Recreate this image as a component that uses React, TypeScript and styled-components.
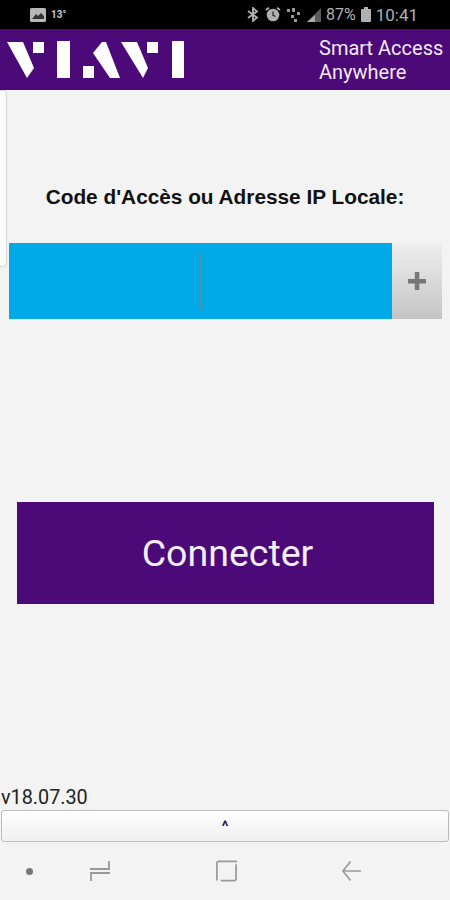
import React, {FC} from 'react';
import styled, {createGlobalStyle} from 'styled-components';

const GlobalStyle = createGlobalStyle`
    html, body {
        margin: 0;
        padding: 0;
        background: #f3f3f3;
        font-family: Roboto, "Liberation Sans", sans-serif;
    }
`;

const Screen = styled.div`
    position: relative;
    display: flex;
    flex-direction: column;
    width: 450px;
    height: 900px;
    overflow: hidden;
    background: #f3f3f3;
`;

const StatusBar = styled.div`
    display: flex;
    align-items: center;
    justify-content: space-between;
    height: 29px;
    padding: 0 32px 0 30px;
    background: #000;
    color: #b4b4b4;
    font-size: 14px;
`;

const StatusGroup = styled.div`
    display: flex;
    align-items: center;
    gap: 5px;
`;

const Weather = styled.span`
    color: #c8c8c8;
    font-size: 10px;
    font-weight: 700;
`;

const StatusText = styled.span<{ $size: number }>`
    font-size: ${({$size}) => $size}px;
    color: #b0b0b0;
    white-space: nowrap;
`;

const Header = styled.header`
    display: flex;
    align-items: center;
    justify-content: space-between;
    height: 61px;
    padding: 0 6px 0 7px;
    box-sizing: border-box;
    background: #4b0a78;
`;

const Tagline = styled.div`
    width: 125px;
    color: #f1e9f5;
    font-size: 20px;
    line-height: 24px;
`;

const SideTab = styled.div`
    position: absolute;
    top: 90px;
    left: 0;
    width: 7px;
    height: 177px;
    box-sizing: border-box;
    background: #fbfbfb;
    border: 1px solid #d6d6d6;
    border-left: 0;
    border-radius: 0 4px 4px 0;
`;

const Main = styled.main`
    flex: 1;
    display: flex;
    flex-direction: column;
`;

const Label = styled.div`
    margin-top: 95px;
    color: #111;
    font-family: "Liberation Sans", Arial, sans-serif;
    font-size: 20.8px;
    font-weight: 700;
    line-height: 24px;
    text-align: center;
`;

const InputRow = styled.div`
    display: flex;
    height: 76px;
    margin: 34px 8px 0 9px;
`;

const CodeField = styled.div`
    flex: 1;
    display: flex;
    align-items: center;
    justify-content: center;
    background: #00aae9;
`;

const Caret = styled.div`
    width: 2px;
    height: 57px;
    background: #5b8ca3;
`;

const PlusButton = styled.div`
    display: flex;
    align-items: center;
    justify-content: center;
    width: 50px;
    background: linear-gradient(#efefef, #c4c4c4);
    color: #777;
`;

const ConnectButton = styled.button`
    display: block;
    height: 102px;
    margin: 183px 16px 0 17px;
    padding: 0 0 0 4px;
    border: 0;
    background: #4b0a78;
    color: #f4eef8;
    font-family: Roboto, sans-serif;
    font-size: 37.5px;
`;

const Version = styled.div`
    margin-top: auto;
    padding-left: 1px;
    color: #222;
    font-size: 19.8px;
    line-height: 20px;
`;

const Drawer = styled.div`
    display: flex;
    align-items: center;
    justify-content: center;
    height: 32px;
    margin: 2px 1px 0;
    box-sizing: border-box;
    background: linear-gradient(#ffffff, #efefef);
    border: 1px solid #bdbdbd;
    border-radius: 3px;
    color: #222;
    font-size: 15px;
    font-weight: 700;
`;

const NavBar = styled.nav`
    display: flex;
    align-items: center;
    height: 58px;
    color: #9a9a9a;
`;

const NavSlot = styled.div<{ $left: number; $width: number }>`
    display: flex;
    justify-content: center;
    width: ${({$width}) => $width}px;
    margin-left: ${({$left}) => $left}px;
`;

const ViaviLogo: FC = () => (
    <svg width="178" height="38" viewBox="7 41 178 38" fill="#fff">
        <polygon points="7,42 23,42 34,68 27,78" />
        <rect x="33" y="42" width="11" height="11" />
        <rect x="57" y="41" width="13" height="37" />
        <rect x="83" y="66" width="11" height="12" />
        <polygon points="102,42 106,42 120,78 110,78 93,53" />
        <polygon points="121,42 137,42 148,68 143,78" />
        <rect x="147" y="42" width="11" height="11" />
        <rect x="172" y="41" width="12" height="37" />
    </svg>
);

const App: FC = () => (
    <>
        <GlobalStyle />
        <Screen>
            <StatusBar>
                <StatusGroup>
                    <svg width="16" height="14" viewBox="0 0 16 14">
                        <rect width="16" height="14" rx="1.5" fill="#b8b8b8" />
                        <path d="M2 11 L6 6 L8 8 L11 5 L14 8 V11 Z" fill="#333" />
                    </svg>
                    <Weather>13°</Weather>
                </StatusGroup>
                <StatusGroup>
                    <svg width="14" height="15" viewBox="0 0 14 15" fill="none" stroke="#b0b0b0" strokeWidth="1.8">
                        <path d="M2 4 L11 10.5 L7 14 V1 L11 4.5 L2 11" />
                    </svg>
                    <svg width="16" height="15" viewBox="0 0 16 15">
                        <circle cx="8" cy="8" r="6.3" fill="#b0b0b0" />
                        <path d="M8 4.5 V8.3 L10.5 9.5" fill="none" stroke="#222" strokeWidth="1.2" />
                        <path d="M1 3 L4 0.8 M15 3 L12 0.8" stroke="#b0b0b0" strokeWidth="1.8" />
                    </svg>
                    <svg width="15" height="15" viewBox="0 0 15 15" fill="#9a9a9a">
                        <rect x="1" y="2" width="3" height="3" />
                        <rect x="6" y="1" width="3" height="4" />
                        <rect x="11" y="5" width="3" height="3" />
                        <rect x="5" y="8" width="3" height="3" />
                        <rect x="8" y="12" width="3" height="3" />
                    </svg>
                    <svg width="15" height="15" viewBox="0 0 15 15">
                        <polygon points="1,15 15,15 15,1" fill="#5a5a5a" />
                        <polygon points="1,15 9,15 9,8" fill="#a8a8a8" />
                    </svg>
                    <StatusText $size={16}>87%</StatusText>
                    <svg width="10" height="15" viewBox="0 0 10 15" fill="#b0b0b0">
                        <rect x="3" y="0" width="4" height="2" />
                        <rect x="0" y="2" width="10" height="13" rx="1" />
                    </svg>
                    <StatusText $size={17}>10:41</StatusText>
                </StatusGroup>
            </StatusBar>
            <Header>
                <ViaviLogo />
                <Tagline>Smart Access Anywhere</Tagline>
            </Header>
            <SideTab />
            <Main>
                <Label>Code d'Accès ou Adresse IP Locale:</Label>
                <InputRow>
                    <CodeField>
                        <Caret />
                    </CodeField>
                    <PlusButton>
                        <svg width="18" height="18" viewBox="0 0 18 18" fill="currentColor">
                            <rect x="0" y="7" width="18" height="4.5" />
                            <rect x="6.8" y="0" width="4.5" height="18" />
                        </svg>
                    </PlusButton>
                </InputRow>
                <ConnectButton>Connecter</ConnectButton>
                <Version>v18.07.30</Version>
                <Drawer>^</Drawer>
            </Main>
            <NavBar>
                <NavSlot $left={23} $width={12}>
                    <svg width="9" height="9" viewBox="0 0 9 9">
                        <circle cx="4.5" cy="4.5" r="3.5" fill="#777" />
                    </svg>
                </NavSlot>
                <NavSlot $left={54} $width={22}>
                    <svg width="22" height="24" viewBox="0 0 22 24" fill="none" stroke="currentColor" strokeWidth="1.8">
                        <path d="M20 2 V10 H1 M2 22 V14 H21" />
                    </svg>
                </NavSlot>
                <NavSlot $left={103} $width={24}>
                    <svg width="23" height="24" viewBox="0 0 24 24" fill="none" stroke="currentColor" strokeWidth="1.8">
                        <path d="M22 3 V2 H4 Q2 2 2 4 V22 M6 22 H20 Q22 22 22 20 V5" />
                    </svg>
                </NavSlot>
                <NavSlot $left={102} $width={22}>
                    <svg width="21" height="22" viewBox="0 0 22 22" fill="none" stroke="currentColor" strokeWidth="1.8">
                        <path d="M21 11 H2 M10 1 L2 11 L10 21" />
                    </svg>
                </NavSlot>
            </NavBar>
        </Screen>
    </>
);

export default App;
